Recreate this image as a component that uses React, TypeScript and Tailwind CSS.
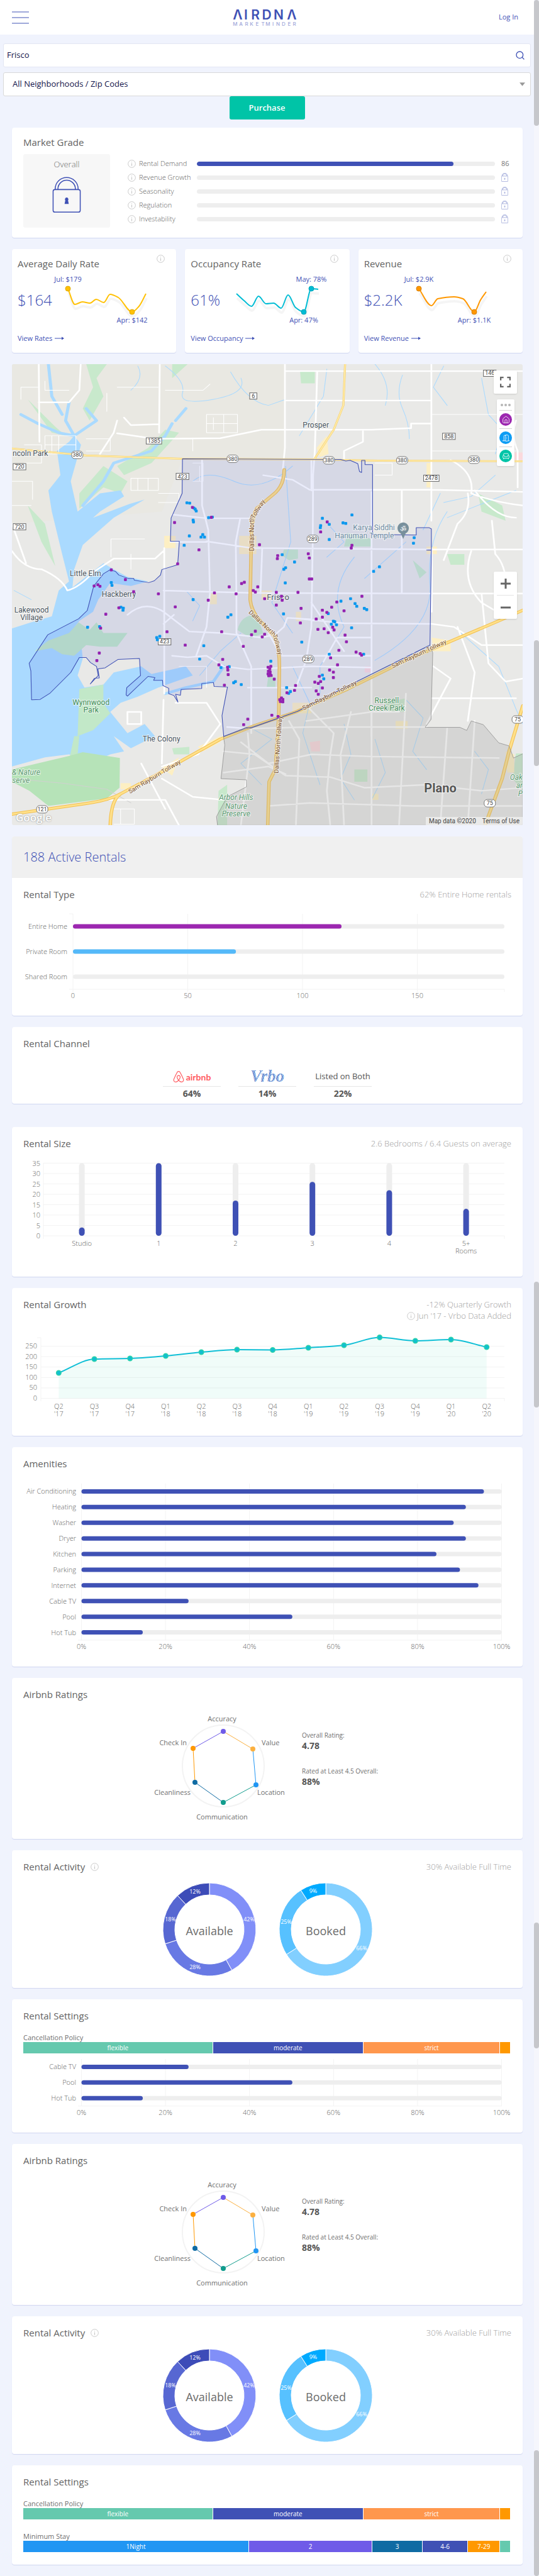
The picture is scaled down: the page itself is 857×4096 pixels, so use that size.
import React from "react";
import { SiAirbnb } from "react-icons/si";
import { Search, House, DoorOpen, Armchair } from "lucide-react";

const INDIGO = "#3f51b5";
const LABEL = "#666666";
const GRID = "#f3f3f3";
const TRACK = "#eeeeee";

/* ---------- shared pieces ---------- */

function Card({ children, className = "" }: { children: React.ReactNode; className?: string }) {
  return (
    <section className={`overflow-hidden rounded-[4px] bg-white shadow-[0_1px_1px_#d0d6f0] ${className}`}>
      {children}
    </section>
  );
}

function Info({ className = "" }: { className?: string }) {
  return (
    <svg viewBox="0 0 14 14" className={`size-[13px] shrink-0 ${className}`} fill="none" stroke="#c6c6c6">
      <circle cx="7" cy="7" r="6.3" />
      <path d="M7 6v4.5M7 3.4v1.3" strokeWidth="1.2" />
    </svg>
  );
}

function CardHeader({ title, info, note }: { title: string; info?: boolean; note?: React.ReactNode }) {
  return (
    <header className="flex items-start justify-between px-[18px] pt-4">
      <h2 className="flex items-center gap-[9px] text-[15px] leading-5 text-[#636363]">
        {title}
        {info && <Info />}
      </h2>
      {note && (
        <div className="mt-px text-right text-[13px] leading-[18px] font-light text-[#a0a0a0]">{note}</div>
      )}
    </header>
  );
}

function Padlock({ className = "", color = INDIGO, width = 1.6 }: { className?: string; color?: string; width?: number }) {
  return (
    <svg viewBox="0 0 48 60" className={className} fill="none" stroke={color} strokeWidth={width}>
      <rect x="1.5" y="21" width="45" height="37.5" rx="3" />
      <path d="M5 21v-1a19 19 0 0 1 38 0v1M9.5 21v-1a14.500 14.500 0 0 1 29 0v1" />
      <path d="M24 35a2.200 2.200 0 0 1 1.400 3.800L26.500 44h-5l1.100-5.200A2.200 2.200 0 0 1 24 35z" fill={color} />
    </svg>
  );
}

/* Monotone cubic curve through the given points. */
function smooth(points: number[][]) {
  let d = `M${points[0][0]} ${points[0][1]}`;
  const n = points.length;
  const dx: number[] = [];
  const m: number[] = [];
  for (let i = 0; i < n - 1; i++) {
    dx[i] = points[i + 1][0] - points[i][0];
    m[i] = (points[i + 1][1] - points[i][1]) / dx[i];
  }
  const t = points.map((_, i) => {
    if (i === 0) return m[0];
    if (i === n - 1) return m[n - 2];
    if (m[i - 1] * m[i] <= 0) return 0;
    return (2 * m[i - 1] * m[i]) / (m[i - 1] + m[i]);
  });
  for (let i = 0; i < n - 1; i++) {
    const [x0, y0] = points[i];
    const [x1, y1] = points[i + 1];
    const h = dx[i] / 3;
    d += `C${x0 + h} ${y0 + t[i] * h} ${x1 - h} ${y1 - t[i + 1] * h} ${x1} ${y1}`;
  }
  return d;
}

/* ---------- header ---------- */

function Logo() {
  return (
    <svg viewBox="0 0 102 28" className="h-7 w-[102px] overflow-visible font-['Inter']" textAnchor="middle" role="img" aria-label="AIRDNA MarketMinder">
      <text x="8 21 36 54 73 94" y="17" fontSize="21" fontWeight="600" fill={INDIGO}>ΛIRDNΛ</text>
      <text x="4 13 22 30 39 48 56 64 72 81 90 98" y="27" fontSize="8" fontWeight="500" fill="#9fa8da">
        MARKETMINDER
      </text>
    </svg>
  );
}

function TopBar() {
  return (
    <header className="grid h-[55px] grid-cols-3 items-center bg-white pr-[25px] pl-[19px]">
      <button aria-label="Menu" className="flex w-[27px] flex-col gap-[7px]">
        <span className="h-[2px] bg-[#9fa8da]" />
        <span className="h-[2px] bg-[#9fa8da]" />
        <span className="h-[2px] bg-[#9fa8da]" />
      </button>
      <div className="flex justify-center">
        <Logo />
      </div>
      <a href="#login" className="text-right text-[11px] text-[#3f51b5]">Log In</a>
    </header>
  );
}

function Filters() {
  return (
    <div className="px-[5px] pt-[14px]">
      <div className="flex h-[38px] items-center rounded-[3px] border border-[#e3e6f3] bg-white pr-2 pl-[5px]">
        <input aria-label="Market" defaultValue="Frisco" className="min-w-0 grow text-[13px] font-medium text-[#14144b] outline-none" />
        <button aria-label="Search">
          <Search className="size-4 text-[#3f51b5]" />
        </button>
      </div>
      <div className="relative mt-2">
        <select
          aria-label="Neighborhood"
          className="h-[38px] w-full appearance-none rounded-[3px] border border-[#d9d9d9] bg-white pl-[14px] text-[13px] font-medium text-[#14144b]"
        >
          <option>All Neighborhoods / Zip Codes</option>
        </select>
        <svg viewBox="0 0 10 6" className="pointer-events-none absolute top-4 right-[9px] h-[6px] w-[9px]">
          <path d="M0 0h10L5 6z" fill="#999" />
        </svg>
      </div>
      <div className="flex justify-center">
        <button className="h-[37px] w-[120px] rounded-[3px] bg-[#00c4a7] text-[13px] font-semibold text-white">Purchase</button>
      </div>
    </div>
  );
}

/* ---------- market grade ---------- */

const grades = [
  { name: "Rental Demand", score: 86 },
  { name: "Revenue Growth" },
  { name: "Seasonality" },
  { name: "Regulation" },
  { name: "Investability" },
];

function MarketGrade() {
  return (
    <Card>
      <h2 className="px-[18px] pt-[13px] text-[15px] leading-5 text-[#636363]">Market Grade</h2>
      <div className="flex px-[18px] pt-[9px] pb-4">
        <div className="flex h-[117px] w-[138px] shrink-0 flex-col items-center rounded-[3px] bg-[#f7f7f7] pt-[7px]">
          <span className="text-[13px] leading-[18px] font-light text-[#6f6f6f]">Overall</span>
          <Padlock className="mt-[11px] h-[58px] w-[46px]" />
        </div>
        <ul className="ml-7 grow pt-1">
          {grades.map((g) => (
            <li key={g.name} className="flex h-[22px] items-center">
              <Info />
              <span className="ml-[5px] w-[92px] text-[11px] font-light whitespace-nowrap text-[#5f5f5f]">{g.name}</span>
              <span className="h-[7px] grow overflow-hidden rounded-full bg-[#eeeeee]">
                {g.score && <span className="block h-full rounded-full bg-[#3f51b5]" style={{ width: `${g.score}%` }} />}
              </span>
              <span className="ml-[10px] flex w-4 text-[11px] text-[#777777]">
                {g.score ?? <Padlock className="h-[14px] w-[11px]" color="#aab2dd" width={4} />}
              </span>
            </li>
          ))}
        </ul>
      </div>
    </Card>
  );
}

/* ---------- metric cards ---------- */

type Metric = {
  title: string;
  value: string;
  link: string;
  color: string;
  rim: string;
  points: number[][];
  high: { i: number; text: string };
  low: { i: number; text: string };
};

const metrics: Metric[] = [
  {
    title: "Average Daily Rate", value: "$164", link: "View Rates", color: "#ffc107", rim: "#e0aa00",
    points: [[13, 24], [24, 49], [36, 45], [48, 47], [58, 41], [70, 46], [80, 33], [93, 38], [115, 61], [126, 52], [137, 32]],
    high: { i: 0, text: "Jul: $179" }, low: { i: 8, text: "Apr: $142" },
  },
  {
    title: "Occupancy Rate", value: "61%", link: "View Occupancy", color: "#00bcd4", rim: "#00a3b8",
    points: [[6, 32], [18, 43], [30, 52], [41, 36], [53, 48], [65, 47], [77, 55], [88, 34], [100, 54], [113, 61], [125, 24], [136, 25]],
    high: { i: 10, text: "May: 78%" }, low: { i: 9, text: "Apr: 47%" },
  },
  {
    title: "Revenue", value: "$2.2K", link: "View Revenue", color: "#ff9800", rim: "#d87f00",
    points: [[20, 24], [40, 51], [50, 40], [76, 37], [90, 40], [108, 61], [118, 42], [127, 29]],
    high: { i: 0, text: "Jul: $2.9K" }, low: { i: 5, text: "Apr: $1.1K" },
  },
];

function MetricCard({ m }: { m: Metric }) {
  const [hx, hy] = m.points[m.high.i];
  const [lx, ly] = m.points[m.low.i];
  return (
    <Card className="px-[9px] pt-[9px] pb-[14px]">
      <div className="flex justify-between pr-[9px]">
        <h2 className="pt-1 text-[15px] leading-5 text-[#636363]">{m.title}</h2>
        <Info />
      </div>
      <div className="mt-[6px] flex h-[84px] items-center">
        <strong className="w-[67px] shrink-0 text-[24px] leading-8 font-light text-[#3f51b5]">{m.value}</strong>
        <svg viewBox="0 0 160 84" className="h-[84px] w-40 shrink-0 overflow-visible" fontSize="11" textAnchor="middle">
          <path d={smooth(m.points)} fill="none" stroke="#000" strokeOpacity="0.04" strokeWidth="4" transform="translate(1 7)" />
          <path d={smooth(m.points)} fill="none" stroke={m.color} strokeWidth="2" />
          <circle cx={hx} cy={hy} r="4" fill={m.color} stroke={m.rim} />
          <circle cx={lx} cy={ly} r="4" fill={m.color} stroke={m.rim} />
          <text x={hx} y="13" fill={INDIGO}>{m.high.text}</text>
          <text x={lx} y="78" fill={INDIGO}>{m.low.text}</text>
        </svg>
      </div>
      <a href="#details" className="mt-[10px] flex items-center gap-1 text-[11px] leading-[18px] text-[#3f51b5]">
        {m.link}
        <svg viewBox="0 0 15 8" className="h-2 w-[15px]" fill={INDIGO}>
          <path d="M0 3.500h11V1.500L15 4l-4 2.500V4.500H0z" />
        </svg>
      </a>
    </Card>
  );
}

/* ---------- map ---------- */

const KX = 0.5466;
const KY = 0.4825;
const px = (x: number) => (x - 34) * KX;
const py = (y: number) => (y - 14) * KY;

const whiteRoads =
  "M34 630Q70 690 120 690Q180 720 195 760Q230 750 270 700L330 655H450L475 630M34 540L75 670M828 14V290L822 360M828 37H1520M922 37L915 300L910 380L909 590L905 880L890 990L860 1080M832 134H1254M1254 14V530M340 242L450 260L640 258L760 230H1080L1195 225V210H1254M234 14L230 100L200 140H112M464 14L462 240M112 14L114 270M1055 235V270L1000 300V330M765 380L850 395L900 428H1254L1520 435M502 510L600 522H730M600 598L730 620L1254 625H1520M495 600H600M587 330V480L605 560L610 770L600 880L570 975M477 620V1100M475 760L730 768L1254 770H1520M698 522L685 600L687 780V900L730 1010V1230M762 620L757 770M780 900L810 960M860 852L1000 868L1250 870M640 900L760 915L800 905L825 880L835 850L905 855M820 975H1080M500 975L545 980L600 975L650 1010L720 1020L905 1010L1080 1014M905 800L1000 960M940 995L980 915H1080M720 1080H905M1080 435V1240M905 430V330M1168 430V770M370 840Q420 790 475 830L550 895L640 900M1255 620V830M1310 330Q1380 370 1370 440Q1440 470 1520 480M1380 430Q1440 520 1500 520M1290 660Q1310 600 1330 540Q1370 500 1360 440M1370 630Q1340 730 1400 800L1460 840Q1490 700 1440 640L1430 530M1255 870L1320 880L1400 940L1520 940M1400 770L1420 1000L1470 1060L1520 1050M1255 1115H1500M1330 880L1380 1030L1360 1190M475 1120L470 1330M510 1130H600L640 1200L575 1300L470 1340M470 1380L560 1440L650 1450M300 1450H480L520 1534M370 1160H410V1200H370V1160M410 1330L480 1480M1260 1010L1310 1050L1240 1200M340 200L330 240L290 310M360 190L380 215L460 212M505 840L475 870M1500 200Q1485 250 1505 300V420";
const planoRoads =
  "M650 1290L740 1300L830 1370L960 1375L1060 1410L1240 1400L1400 1420L1520 1410M700 1260L780 1330L905 1300L1080 1307L1450 1312M660 1210L720 1215L900 1210H1240M840 1190L870 1250L860 1534M900 1150L970 1230L960 1300L950 1420L960 1534M1080 1060V1534M1180 1100L1160 1534M720 1230L725 1300L700 1534M1020 1160L990 1300L1000 1534M780 1470L900 1460L1200 1470H1520M1300 1215L1280 1534M1380 1190L1360 1534M650 1360L780 1340L830 1365M890 1190L1080 1160L1160 1160";
const minorRoads =
  "M340 90H460M60 130V90H110M600 180h90v60h-90zM620 190v40M650 180v60M600 210h90M130 250h90v60h-90zM150 250v60M170 250v60M130 280h90M380 390h80v40h-80zM400 390v40M430 390v40M70 280h50v60H70M560 340h30v60h-30M580 350v50M1090 340h50v40h-50M460 440h60v30h-60M250 260h70v40h-70M34 400h60v60M510 260h50v40M380 690V640M322 650V590H420M34 480H90M1256 180H1520M1256 300H1500M600 1080v-70h-80M330 1480h60v50h-60M350 1480v50M130 70v30h70M310 110v60M480 100h110l20-20";
const goldRoads =
  "M1003 14L998 150L970 230L915 325M34 292L250 315L530 326L920 328L1100 332L1520 334";
const tollways =
  "M826 362Q826 410 800 438L745 490Q730 530 730 600L727 790Q730 830 760 865L800 915Q812 950 812 1010L810 1180L800 1350L782 1390L778 1534M34 1497L250 1462Q320 1450 350 1430L450 1370L640 1250L740 1205L860 1160L1010 1085L1190 985L1450 860L1520 825M350 1430Q322 1450 320 1534M1520 1140L1480 1290L1460 1380L1410 1534";
const water =
  "M34 885L90 865L150 845L170 760L200 730L180 640L150 500L140 430L175 380L165 300L200 270L215 250L235 280L205 400L225 500L290 440L350 430L360 450L290 500L270 520L375 475L420 460L330 520L280 570L240 610L215 690L210 750L300 670L330 690L370 715L430 730L380 745L320 735L285 790L270 830L230 860L210 890L235 930L240 985L225 1040L245 1080L300 1070L330 1030L410 1010L440 1035L500 1020L540 1010L560 1040L460 1080L400 1110L350 1130L320 1160L370 1230L420 1200L450 1240L380 1280L330 1240L360 1290L320 1300L270 1325L200 1300L130 1310L34 1340z";
const inlets =
  "M60 180L110 210L170 240L215 250M200 140L190 200L215 250M250 160L280 200L215 250M500 210L480 250L440 300L330 340L300 400L240 480M540 160L510 200M140 14L150 120L180 180M480 1100L540 1080L620 1060L650 1010";
const creeks =
  "M480 20Q540 70 530 110T620 130T700 60M670 40Q720 140 780 150L830 130M560 400Q600 360 680 400T850 350M830 350L845 600L790 800L850 900M950 30L940 120L870 250M1090 14Q1140 80 1120 150M1170 50Q1150 110 1170 160T1190 260M1290 20L1260 90L1300 150M1400 60L1420 180L1460 230L1440 310M1300 500Q1240 600 1250 740T1090 990M1280 440L1230 560M1500 430L1300 520M1030 650Q950 760 1000 880L930 1010L930 1100M1180 600L1130 650L1060 720M700 900L640 960L580 1040M540 760L580 810L560 860M850 1010L900 1130L880 1230L930 1400M1000 1200L1020 1300L990 1380L1030 1450M1180 1120L1230 1180L1200 1290L1240 1350M1340 900L1450 1010L1500 1150L1520 1200M740 1220L790 1250L700 1330L760 1400M1380 1290L1420 1350L1400 1430M1090 1250L1120 1360L1080 1450M960 550L1000 600L950 650M40 760L90 790M380 100Q420 60 400 20M60 1230L34 1190M1440 380L1370 450L1290 470";
const greens =
  "M690 890Q700 840 745 840L765 900L730 918zM825 625H866V655L840 660L820 645zM872 37H915V77H875zM1300 640H1350V675H1310zM1010 570L1080 590V615H1000zM1500 1297H1520V1420L1490 1380zM1030 1350H1068V1390H1030zM635 1420L660 1400V1534H632zM780 1040L800 1050V1080H775zM1120 1130L1180 1115V1160H1130zM1200 660L1240 700L1220 720zM250 14H310L280 60L300 120L260 200L240 160L270 90zM500 60L545 14H500zM480 230L520 240L440 340L360 380L340 350L430 290zM300 350L370 400L350 440L300 420L230 490V440zM80 480L130 540L160 680L120 600zM80 130L160 220L190 250L150 240zM1390 440L1460 480L1470 530L1400 500zM500 1280L550 1275V1300H505z";
const shoreGreens =
  "M100 960L140 925L200 900L228 865L260 890L280 865L300 900L370 900L340 945L290 945L250 940L215 975L180 970L150 950zM230 1085L300 1070V1130L320 1165L270 1220L225 1240zM215 1240L230 1240L225 1300L200 1320z";
const natureReserve = "M34 1350L200 1305L240 1293L348 1312L347 1410L310 1445L140 1470L85 1420L34 1390z";
const yellowPatches =
  "M920 290L950 250L955 310L930 320zM1240 340H1255V420H1240zM477 580H510V620H477zM610 770H630V805H610zM695 580H745V640H695zM850 1130H905V1165H850zM470 1345L520 1310L500 1370zM575 1275L640 1240V1260L590 1290zM200 755H225V790H200zM1255 915L1310 925V960H1260zM760 760H790V790H760zM350 1395H380V1415H350zM860 830H875V860H860zM1240 615H1270V640H1240zM1080 1430H1100V1450H1080zM1150 1190H1185V1215H1150zM1470 1290L1495 1300V1360H1475z";
const frisco =
  "M530 326L990 328L1005 333L1018 331L1040 342L1045 368L1051 371V331H1061V345H1083V575L1210 577V553H1248L1254 557V626L1240 627H1254L1250 940L1010 1075L865 1158L730 1213L716 1212L650 1241L645 1172L661 1078L622 1076L620 1063L586 1067V1083L526 1086L524 1105L510 1102L517 1128L505 1106L490 1100L490 1082L473 1073L472 1056L446 1056L450 1047L430 1043L370 1108L366 1104L368 1080L408 1040L405 984L343 987L305 1015L284 1018L288 1048L274 1049L262 1068L285 1040L280 1010L262 997L250 981H230L205 1030L145 1098L116 1119L91 1120L89 1025L84 1000L138 906L228 853L253 826L272 745L300 705L319 692L335 697L345 709L372 720L388 720L390 726L432 734L448 728L466 709L470 691L516 675L521 598H495L497 521L529 440z";
const plano =
  "M650 1241L865 1158L1250 940L1258 965L1253 1185L1236 1211H1337L1357 1221L1370 1190L1405 1202L1450 1262L1480 1272L1493 1312L1520 1298V1534H632L629 1505L660 1440L716 1407V1384L642 1380L653 1270z";

const purpleDots = [
  [559, 486], [507, 536], [614, 519], [578, 626], [516, 672], [323, 692], [364, 724], [388, 764], [273, 745], [284, 741], [290, 746], [460, 771], [509, 814], [345, 817], [307, 838], [292, 884], [288, 966], [281, 991], [485, 896], [538, 940], [605, 792], [623, 768], [666, 748], [686, 771], [702, 737], [710, 733], [749, 748], [736, 760], [742, 765], [754, 609], [807, 645], [806, 655], [803, 766], [769, 787], [818, 779], [820, 792], [803, 808], [866, 766], [899, 722], [906, 722], [896, 639], [899, 653], [932, 567], [951, 534], [1023, 611], [1021, 620], [1052, 779], [979, 798], [964, 815], [937, 825], [950, 832], [1000, 827], [875, 819], [937, 848], [919, 854], [873, 867], [924, 888], [942, 886], [967, 881], [971, 890], [954, 899], [1003, 907], [1007, 929], [985, 957], [1035, 963], [1047, 968], [1051, 973], [961, 982], [981, 1005], [958, 1022], [969, 1029], [969, 1047], [928, 1043], [915, 1062], [925, 1066], [932, 1060], [937, 1081], [919, 1091], [925, 1102], [859, 1073], [856, 1089], [834, 1097], [644, 896], [742, 894], [731, 906], [769, 904], [762, 913], [707, 944], [647, 987], [636, 1005], [661, 1013], [662, 1022], [663, 1037], [652, 1072], [787, 1010], [779, 1013], [784, 1018], [780, 1026], [785, 1028], [779, 1035], [785, 1036], [781, 1041], [788, 1040], [797, 1052], [818, 1114], [813, 1120], [822, 1119], [815, 1126], [822, 1127], [790, 1171], [808, 1175], [720, 1184], [708, 1202],
];
const blueDots = [
  [543, 471], [551, 472], [563, 488], [567, 492], [570, 498], [606, 520], [617, 518], [561, 528], [562, 534], [550, 580], [589, 576], [584, 584], [594, 584], [535, 611], [323, 734], [325, 743], [351, 815], [358, 818], [357, 825], [254, 881], [289, 879], [561, 790], [671, 840], [662, 848], [464, 911], [455, 915], [457, 922], [592, 942], [580, 986], [642, 1014], [666, 1011], [684, 1060], [679, 1064], [701, 1070], [787, 993], [833, 1080], [844, 1093], [839, 1099], [877, 930], [820, 642], [856, 666], [830, 685], [825, 690], [829, 735], [824, 837], [937, 522], [957, 542], [932, 546], [931, 553], [957, 592], [997, 537], [1005, 539], [1023, 511], [1204, 586], [1202, 604], [1103, 682], [1086, 697], [1019, 787], [991, 795], [1032, 803], [1037, 812], [1059, 819], [1066, 823], [954, 836], [969, 861], [973, 863], [963, 871], [978, 873], [1022, 883], [957, 970], [1057, 970], [937, 1039], [941, 1051],
];

const shields: [number, number, string][] = [
  [736, 119, "6"], [447, 267, "1385"], [56, 352, "720"], [56, 550, "720"], [530, 384, "423"], [478, 929, "423"], [1305, 252, "858"], [1254, 390, "2478"], [1424, 44, "146"],
];
const rounds: [number, number, string][] = [
  [224, 313, "380"], [676, 326, "380"], [956, 331, "380"], [1169, 331, "380"], [1378, 329, "380"], [909, 590, "289"], [896, 986, "289"], [122, 1481, "121"], [1505, 1185, "75"], [1424, 1461, "75"],
];
const places: [number, number, string, string, number][] = [
  [918, 215, "Prosper", "#4a5560", 12], [248, 704, "Little Elm", "#4a5560", 12], [345, 773, "Hackberry", "#4a5560", 12],
  [91, 825, "Lakewood", "#4a5560", 12], [91, 849, "Village", "#4a5560", 12], [469, 1249, "The Colony", "#4a5560", 12],
  [808, 783, "Frisco", "#4a5560", 13], [264, 1128, "Wynnwood", "#3c8b55", 12], [264, 1154, "Park", "#3c8b55", 12],
  [1124, 1122, "Russell", "#4b9160", 12], [1124, 1148, "Creek Park", "#4b9160", 12],
  [1087, 553, "Karya Siddhi", "#6d8ba1", 12], [1059, 580, "Hanuman Temple", "#6d8ba1", 12],
];
const parks: [number, number, string][] = [
  [686, 1443, "Arbor Hills"], [686, 1470, "Nature"], [686, 1496, "Preserve"], [75, 1359, "& Nature"], [60, 1386, "serve"], [1501, 1376, "Oak"], [1510, 1403, "ar"], [1513, 1430, "P"],
];
const roadNames: [number, number, number, string][] = [
  [732, 573, -90, "Dallas North"], [750, 492, -58, "Tollway"], [762, 868, 43, "Dallas North"], [806, 938, 74, "Tollway"], [809, 1268, -86, "Dallas North Tollway"],
  [449, 1374, -31, "Sam Rayburn Tollway"], [958, 1106, -26, "Sam Rayburn Tollway"], [1218, 969, -25, "Sam Rayburn Tollway"],
];

function MapArt() {
  return (
    <svg viewBox="0 0 812 733" className="block w-full font-['Roboto']" textAnchor="middle" role="img" aria-label="Map of active rentals in Frisco">
      <rect width="812" height="733" fill="#e9e9e7" />
      <g transform={`scale(${KX} ${KY}) translate(-34 -14)`}>
        <path d="M34 14H828V320L530 326L470 500L34 540z" fill="#e9e8e2" />
        <path d={greens} fill="#c8e9cc" />
        <path d={yellowPatches} fill="#fdefc3" />
        <path d="M1490 305H1520V330H1495zM1060 1010H1080V1030H1060zM900 1260L930 1255V1290H905z" fill="#fbd9dc" />
        <path d={water} fill="#aadaff" />
        <path d={shoreGreens} fill="#c2e8c8" />
        <path d={natureReserve} fill="#b6e3b8" />
      </g>
      <g transform={`scale(${KX} ${KY}) translate(-34 -14)`} fill="none" strokeLinejoin="round" strokeLinecap="round">
        <g stroke="#aadaff">
          <path d={inlets} strokeWidth="9" />
          <path d={creeks} strokeWidth="2" />
        </g>
        <path d="M34 1380L180 1395L310 1415L380 1460" stroke="#d0d0d0" strokeWidth="2" />
        <path d={minorRoads} stroke="#ffffff" strokeWidth="2" />
        <path d={whiteRoads} stroke="#ffffff" strokeWidth="5" />
        <path d={planoRoads} stroke="#ffffff" strokeWidth="5" />
        <path d={goldRoads} stroke="#f6cf65" strokeWidth="6" />
        <path d={goldRoads} stroke="#ffe9a5" strokeWidth="4" />
        <path d={tollways} stroke="#f2c04f" strokeWidth="10" />
        <path d={tollways} stroke="#ffe08a" strokeWidth="6" />
        <path d={plano} fill="#9a9a9a" fillOpacity="0.250" stroke="#8d8d8d" strokeWidth="1.500" />
        <path d={frisco} fill="#3f51d8" fillOpacity="0.110" stroke={INDIGO} strokeWidth="2" />
      </g>
      {roadNames.map(([x, y, a, t]) => (
        <text key={`${x}-${y}`} transform={`translate(${px(x)} ${py(y)}) rotate(${a})`} y="3" fontSize="10" fill="#7a5230" stroke="#fff" strokeOpacity="0.600" strokeWidth="2" paintOrder="stroke">{t}</text>
      ))}
      {shields.map(([x, y, t]) => (
        <g key={`${x}-${y}`}>
          <rect x={px(x) - 3.5 - t.length * 2.2} y={py(y) - 5} width={7 + t.length * 4.4} height="10" fill="#fff" stroke="#666" />
          <text x={px(x)} y={py(y) + 3} fontSize="9" fill="#444">{t}</text>
        </g>
      ))}
      {rounds.map(([x, y, t]) => (
        <g key={`${x}-${y}`}>
          <rect x={px(x) - 9} y={py(y) - 6} width="18" height="12" rx="5" fill="#fff" stroke="#777" />
          <text x={px(x)} y={py(y) + 3} fontSize="9" fill="#444">{t}</text>
        </g>
      ))}
      <g stroke="#fff" strokeOpacity="0.700" strokeWidth="2" paintOrder="stroke">
        {places.map(([x, y, t, c, s]) => (
          <text key={t} x={px(x)} y={py(y) + 4} fontSize={s} fill={c}>{t}</text>
        ))}
        {parks.map(([x, y, t]) => (
          <text key={t} x={px(x)} y={py(y) + 4} fontSize="12" fontStyle="italic" fill="#5c9a72">{t}</text>
        ))}
        <text x="1" y={py(309) + 4} fontSize="12" fill="#4a5560" textAnchor="start">ncoln Park</text>
        <text x={px(1280)} y={py(1410) + 7} fontSize="20" fontWeight="700" fill="#555">Plano</text>
      </g>
      <path d={`M${px(1172)} ${py(590)}l-4-9a9 9 0 1 1 8 0z`} fill="#78909c" />
      <text x={px(1172)} y={py(557) + 4} fontSize="11" fill="#fff">ॐ</text>
      {blueDots.map(([x, y]) => (
        <rect key={`${x}-${y}`} x={px(x) - 2.3} y={py(y) - 2.3} width="4.600" height="4.600" rx="1.200" fill="#0c98ee" />
      ))}
      {purpleDots.map(([x, y]) => (
        <rect key={`${x}-${y}`} x={px(x) - 2.3} y={py(y) - 2.3} width="4.600" height="4.600" rx="1.200" fill="#9322b0" />
      ))}
    </svg>
  );
}

function RentalMap() {
  return (
    <section className="relative overflow-hidden rounded-[3px]">
      <MapArt />
      <button aria-label="Full screen" className="absolute top-[10px] right-[9px] flex size-[37px] items-center justify-center rounded-[2px] bg-white shadow">
        <svg viewBox="0 0 18 18" className="size-[17px]" fill="none" stroke="#666" strokeWidth="2.400">
          <path d="M1.200 6V1.200H6M12 1.200h4.800V6M16.800 12v4.800H12M6 16.800H1.200V12" />
        </svg>
      </button>
      <div className="absolute top-14 right-[13px] flex w-7 flex-col items-center rounded-[2px] bg-white px-1 pb-[6px] shadow-sm">
        <div className="flex h-[17px] items-center gap-[2px]">
          <span className="size-1 rounded-full bg-[#b5b5b5]" />
          <span className="size-1 rounded-full bg-[#b5b5b5]" />
          <span className="size-1 rounded-full bg-[#b5b5b5]" />
        </div>
        <button aria-label="Entire homes" className="w-full border-t border-[#d5d5d5] pt-1 pb-1">
          <span className="flex size-5 items-center justify-center rounded-full bg-[#9c27b0] text-white"><House className="size-[13px]" strokeWidth={1.5} /></span>
        </button>
        <button aria-label="Private rooms" className="w-full border-t border-[#d5d5d5] pt-1 pb-1">
          <span className="flex size-5 items-center justify-center rounded-full bg-[#0c9cf4] text-white"><DoorOpen className="size-[13px]" strokeWidth={1.5} /></span>
        </button>
        <button aria-label="Shared rooms" className="w-full border-t border-[#d5d5d5] pt-1">
          <span className="flex size-5 items-center justify-center rounded-full bg-[#00c4a7] text-white"><Armchair className="size-[13px]" strokeWidth={1.5} /></span>
        </button>
      </div>
      <div className="absolute top-[330px] right-[9px] flex w-[37px] flex-col rounded-[2px] bg-white px-[5px] shadow">
        <button aria-label="Zoom in" className="flex h-[37px] items-center justify-center">
          <svg viewBox="0 0 16 16" className="size-4" stroke="#666" strokeWidth="3"><path d="M0 8h16M8 0v16" /></svg>
        </button>
        <button aria-label="Zoom out" className="flex h-[38px] items-center justify-center border-t border-[#e4e4e4]">
          <svg viewBox="0 0 16 16" className="size-4" stroke="#666" strokeWidth="3"><path d="M0 8h16" /></svg>
        </button>
      </div>
      <span className="absolute bottom-0 left-[6px] font-['Open_Sans'] text-[17px] leading-6 font-semibold text-white [text-shadow:0_0_2px_#777]">Google</span>
      <div className="absolute right-0 bottom-0 flex gap-[10px] bg-[#f0f0f0]/75 px-[5px] font-['Roboto'] text-[10px] leading-[13px] text-[#444]">
        <span>Map data ©2020</span>
        <a href="#terms">Terms of Use</a>
      </div>
    </section>
  );
}

/* ---------- charts ---------- */

function RentalType() {
  const rows = [
    { name: "Entire Home", count: 117, color: "#9c27b0" },
    { name: "Private Room", count: 71, color: "#54b9f9" },
    { name: "Shared Room", count: 0, color: INDIGO },
  ];
  const x = (v: number) => 97 + v * 3.65;
  return (
    <svg viewBox="0 0 812 183" className="block w-full" fontSize="11" fontWeight="300" fill={LABEL}>
      {[0, 50, 100, 150].map((v) => (
        <g key={v}>
          <path d={`M${x(v)} 21V145`} stroke={GRID} />
          <text x={x(v)} y="155" textAnchor="middle">{v}</text>
        </g>
      ))}
      <path d="M91 21H97M91 141H783V145" stroke={GRID} fill="none" />
      {rows.map((r, i) => (
        <g key={r.name}>
          <text x="88" y={45 + i * 40} textAnchor="end">{r.name}</text>
          <rect x="97" y={37.5 + i * 40} width="686" height="7" rx="3.500" fill={TRACK} />
          {r.count > 0 && <rect x="97" y={37.5 + i * 40} width={r.count * 3.65} height="7" rx="3.500" fill={r.color} />}
        </g>
      ))}
    </svg>
  );
}

function VrboMark() {
  return (
    <svg viewBox="0 0 60 20" className="h-5 w-[60px] overflow-visible" role="img" aria-label="Vrbo">
      <defs>
        <pattern id="stripes" width="2.400" height="4" patternUnits="userSpaceOnUse" patternTransform="rotate(-22)">
          <rect width="2.400" height="4" fill="#c3d9f7" />
          <rect width="1.300" height="4" fill="#4470c0" />
        </pattern>
      </defs>
      <text x="30" y="18" textAnchor="middle" fontFamily="Liberation Serif, serif" fontWeight="700" fontStyle="italic" fontSize="27" fill="url(#stripes)">
        Vrbo
      </text>
    </svg>
  );
}

function RentalChannel() {
  const channels = [
    {
      share: "64%",
      name: (
        <span className="flex items-center gap-[3px] font-['Lato'] text-[14px] font-bold text-[#ff5a5f]">
          <SiAirbnb className="size-[18px]" />airbnb
        </span>
      ),
    },
    { share: "14%", name: <VrboMark /> },
    { share: "22%", name: <span className="text-[13px] whitespace-nowrap text-[#555]">Listed on Both</span> },
  ];
  return (
    <div className="flex justify-center gap-7 pt-8 pb-[7px]">
      {channels.map((c) => (
        <div key={c.share} className="w-[92px] text-center">
          <div className="flex h-[22px] items-center justify-center">{c.name}</div>
          <div className="mt-1 border-t border-[#e6e6e6] pt-[2px] text-[14px] leading-[18px] font-bold text-[#555]">{c.share}</div>
        </div>
      ))}
    </div>
  );
}

function RentalSize() {
  const bars = [["Studio", 4], ["1", 35], ["2", 17], ["3", 26], ["4", 22], ["5+", 13]] as [string, number][];
  const y = (v: number) => 137 - v * 3.3;
  return (
    <svg viewBox="0 0 812 202" className="block w-full" fontSize="11" fontWeight="300" fill={LABEL}>
      {[0, 5, 10, 15, 20, 25, 30, 35].map((v) => (
        <g key={v}>
          <path d={`M50 ${y(v)}H783`} stroke={GRID} />
          <text x="45" y={y(v) + 4} textAnchor="end">{v}</text>
        </g>
      ))}
      <path d="M50 21V142M783 137v5" stroke={GRID} />
      {bars.map(([name, v], i) => {
        const cx = 50 + 122.2 * (i + 0.5);
        return (
          <g key={name}>
            <rect x={cx - 4.5} y={y(35)} width="9" height="115" rx="4.500" fill={TRACK} />
            <rect x={cx - 4.5} y={y(v)} width="9" height={v * 3.3} rx="4.500" fill={INDIGO} />
            <text x={cx} y="153" textAnchor="middle">{name}</text>
            {name === "5+" && <text x={cx} y="165" textAnchor="middle">Rooms</text>}
          </g>
        );
      })}
    </svg>
  );
}

function RentalGrowth() {
  const levels = [82, 60, 59, 55, 49, 45, 45.5, 42, 38, 25.5, 31, 29, 41];
  const quarters = ["Q2 '17", "Q3 '17", "Q4 '17", "Q1 '18", "Q2 '18", "Q3 '18", "Q4 '18", "Q1 '19", "Q2 '19", "Q3 '19", "Q4 '19", "Q1 '20", "Q2 '20"];
  const pts = levels.map((v, i) => [46 + 56.7 * (i + 0.5), v]);
  const line = smooth(pts);
  return (
    <svg viewBox="0 0 812 182" className="block w-full" fontSize="11" fontWeight="300" fill={LABEL}>
      {[0, 50, 100, 150, 200, 250].map((v) => (
        <g key={v}>
          <path d={`M46 ${122.5 - v * 0.332}H783`} stroke={GRID} />
          <text x="40" y={126 - v * 0.332} textAnchor="end">{v}</text>
        </g>
      ))}
      <path d="M40 26H46V127M783 122v5" stroke={GRID} fill="none" />
      <path d={`${line}V122.5H${pts[0][0]}z`} fill="#2ecfa5" fillOpacity="0.070" />
      <path d={line} fill="none" stroke="#0fbfd6" strokeWidth="2" />
      {pts.map(([x, y], i) => (
        <g key={quarters[i]}>
          <circle cx={x} cy={y} r="3.800" fill="#12bfd0" stroke="#2fd3a8" strokeWidth="1.400" />
          <text x={x} y="139" textAnchor="middle">{quarters[i].slice(0, 2)}</text>
          <text x={x} y="151" textAnchor="middle">{quarters[i].slice(3)}</text>
        </g>
      ))}
    </svg>
  );
}

const amenities: [string, number][] = [
  ["Air Conditioning", 95.8], ["Heating", 91.5], ["Washer", 88.6], ["Dryer", 91.5], ["Kitchen", 84.5],
  ["Parking", 90.1], ["Internet", 94.5], ["Cable TV", 25.5], ["Pool", 50.2], ["Hot Tub", 14.6],
];

function PercentBars({ rows, top, height }: { rows: [string, number][]; top: number; height: number }) {
  const bottom = top + rows.length * 24.9;
  return (
    <svg viewBox={`0 0 812 ${height}`} className="block w-full" fontSize="11" fontWeight="300" fill={LABEL}>
      {[0, 20, 40, 60, 80, 100].map((v) => (
        <g key={v}>
          <path d={`M${110.5 + v * 6.68} ${top}V${bottom}`} stroke={GRID} />
          <text x={110.5 + v * 6.68} y={bottom + 14} textAnchor="middle">{v}%</text>
        </g>
      ))}
      <path d={`M105 ${bottom}H779`} stroke={GRID} />
      {rows.map(([name, v], i) => {
        const y = top + (i + 0.5) * 24.9;
        return (
          <g key={name}>
            <text x="102" y={y + 4} textAnchor="end">{name}</text>
            <rect x="110.500" y={y - 3.5} width="668" height="7" rx="3.500" fill={TRACK} />
            <rect x="110.500" y={y - 3.5} width={v * 6.68} height="7" rx="3.500" fill={INDIGO} />
          </g>
        );
      })}
    </svg>
  );
}

function Ratings() {
  const pts: [number, number, string][] = [
    [114, 49, "#6f5be8"], [161, 77, "#fbb040"], [166, 134, "#2196f3"], [114, 162, "#119c8d"], [69, 130, "#0f6ba3"], [66, 76, "#ff9800"],
  ];
  const edges = ["#fbb040", "#2196f3", "#119c8d", "#0f6ba3", "#ff9800", "#6f5be8"];
  return (
    <Card>
      <CardHeader title="Airbnb Ratings" />
      <div className="flex justify-center pr-2">
        <svg viewBox="0 0 230 220" className="h-[220px] w-[230px]" fontSize="11" fill="#6f6f6f">
          <circle cx="114" cy="104" r="65" fill="none" stroke="#f3f3f3" strokeWidth="2" />
          {pts.map(([x, y], i) => {
            const [nx, ny] = pts[(i + 1) % pts.length];
            return <path key={i} d={`M${x} ${y}L${nx} ${ny}`} stroke={edges[i]} />;
          })}
          {pts.map(([x, y, c]) => <circle key={c} cx={x} cy={y} r="4" fill={c} />)}
          <text x="112" y="33" textAnchor="middle">Accuracy</text>
          <text x="175" y="71">Value</text>
          <text x="168" y="150">Location</text>
          <text x="112" y="189" textAnchor="middle">Communication</text>
          <text x="62" y="150" textAnchor="end">Cleanliness</text>
          <text x="56" y="71" textAnchor="end">Check In</text>
        </svg>
        <dl className="ml-[9px] pt-12">
          <dt className="text-[10px] leading-[14px] text-[#6f6f6f]">Overall Rating:</dt>
          <dd className="text-[14px] leading-5 font-bold text-[#555]">4.78</dd>
          <dt className="mt-[23px] text-[10px] leading-[14px] text-[#6f6f6f]">Rated at Least 4.5 Overall:</dt>
          <dd className="text-[14px] leading-5 font-bold text-[#555]">88%</dd>
        </dl>
      </div>
    </Card>
  );
}

type Slice = { share: number; color: string; label?: [number, number] };

function Donut({ name, slices }: { name: string; slices: Slice[] }) {
  let angle = 0;
  const at = (a: number, r: number) => `${74 + r * Math.sin(a)} ${74 - r * Math.cos(a)}`;
  return (
    <svg viewBox="0 0 148 148" className="size-[148px]" textAnchor="middle">
      {slices.map((s) => {
        const a = angle;
        const b = (angle += s.share * Math.PI * 0.02);
        const big = b - a > Math.PI ? 1 : 0;
        return (
          <path
            key={s.color}
            d={`M${at(a, 74)}A74 74 0 ${big} 1 ${at(b, 74)}L${at(b, 55)}A55 55 0 ${big} 0 ${at(a, 55)}z`}
            fill={s.color}
            stroke="#fff"
          />
        );
      })}
      {slices.map((s) => s.label && (
        <text key={s.color} x={s.label[0]} y={s.label[1]} fontSize="9" fontWeight="500" fill="#fff">{s.share}%</text>
      ))}
      <text x="74" y="83" fontSize="18" fill="#6b6b6b">{name}</text>
    </svg>
  );
}

function Activity() {
  return (
    <Card>
      <CardHeader title="Rental Activity" info note="30% Available Full Time" />
      <div className="flex justify-center gap-[37px] pt-4 pb-[19px]">
        <Donut
          name="Available"
          slices={[
            { share: 42, color: "#818ff8", label: [137, 61] },
            { share: 28, color: "#6879e4", label: [51, 137] },
            { share: 18, color: "#5767d2", label: [12, 61] },
            { share: 12, color: "#3d4cb8", label: [51, 17] },
          ]}
        />
        <Donut
          name="Booked"
          slices={[
            { share: 66, color: "#82cfff", label: [131, 107] },
            { share: 25, color: "#57c1ff", label: [11, 65] },
            { share: 9, color: "#00aaff", label: [54, 16] },
          ]}
        />
      </div>
    </Card>
  );
}

type Segment = { text: string; weight: number; color: string };

const policy: Segment[] = [
  { text: "flexible", weight: 552, color: "#65c9ae" },
  { text: "moderate", weight: 437, color: "#3f51b5" },
  { text: "strict", weight: 397, color: "#ff974d" },
  { text: "", weight: 29, color: "#ff9800" },
];
const stay: Segment[] = [
  { text: "1Night", weight: 659, color: "#2196f3" },
  { text: "2", weight: 359, color: "#6f5be8" },
  { text: "3", weight: 145, color: "#0f6ba3" },
  { text: "4-6", weight: 131, color: "#3f51b5" },
  { text: "7-29", weight: 92, color: "#ff9800" },
  { text: "", weight: 29, color: "#65c9ae" },
];

function Stack({ title, parts }: { title: string; parts: Segment[] }) {
  return (
    <div className="mr-5 ml-[18px]">
      <h3 className="text-[11px] leading-[14px] text-[#6f6f6f]">{title}</h3>
      <div className="flex h-[18px] gap-px">
        {parts.map((p) => (
          <div
            key={p.color}
            className="flex min-w-0 basis-0 items-center justify-center text-[10px] font-medium text-white"
            style={{ flexGrow: p.weight, backgroundColor: p.color }}
          >
            {p.text}
          </div>
        ))}
      </div>
    </div>
  );
}

/* ---------- scroll track ---------- */

const scrollMarks = [200, 818, 200, 820, 200, 819, 200, 639, 200];

function ScrollTrack() {
  return (
    <div aria-hidden className="flex w-2 shrink-0 flex-col bg-[#f5f6fc]">
      {scrollMarks.map((size, i) => (
        <div key={i} className={i % 2 === 0 ? "rounded-full bg-[#c6c7cb]" : ""} style={{ flexGrow: size }} />
      ))}
    </div>
  );
}

export default function App() {
  return (
    <div className="flex min-h-screen bg-[#f0f3fd] font-['Open_Sans',sans-serif]">
      <div className="min-w-0 grow">
        <TopBar />
        <Filters />
        <main className="flex flex-col gap-[18px] pt-[13px] pr-[18px] pb-[18px] pl-[19px]">
          <MarketGrade />
          <div className="grid grid-cols-3 gap-[14px]">
            {metrics.map((m) => <MetricCard key={m.title} m={m} />)}
          </div>
          <RentalMap />
          <Card>
            <h1 className="bg-[#f0f0f0] px-[18px] pt-[19px] pb-[19px] text-[20px] leading-7 font-light text-[#3f51b5]">188 Active Rentals</h1>
            <CardHeader title="Rental Type" note="62% Entire Home rentals" />
            <RentalType />
          </Card>
          <Card className="mb-[19px]">
            <CardHeader title="Rental Channel" />
            <RentalChannel />
          </Card>
          <Card>
            <CardHeader title="Rental Size" note="2.6 Bedrooms / 6.4 Guests on average" />
            <RentalSize />
          </Card>
          <Card>
            <CardHeader
              title="Rental Growth"
              note={
                <>
                  <p>-12% Quarterly Growth</p>
                  <p className="flex items-center justify-end gap-[3px]"><Info />Jun '17 - Vrbo Data Added</p>
                </>
              }
            />
            <RentalGrowth />
          </Card>
          <Card>
            <CardHeader title="Amenities" />
            <PercentBars rows={amenities} top={22} height={313} />
          </Card>
          <Ratings />
          <Activity />
          <Card>
            <CardHeader title="Rental Settings" />
            <div className="pt-[18px]">
              <Stack title="Cancellation Policy" parts={policy} />
            </div>
            <PercentBars rows={amenities.slice(7)} top={9} height={126} />
          </Card>
          <Ratings />
          <Activity />
          <Card>
            <CardHeader title="Rental Settings" />
            <div className="flex flex-col gap-5 pt-[18px] pb-5">
              <Stack title="Cancellation Policy" parts={policy} />
              <Stack title="Minimum Stay" parts={stay} />
            </div>
          </Card>
        </main>
      </div>
      <ScrollTrack />
    </div>
  );
}
